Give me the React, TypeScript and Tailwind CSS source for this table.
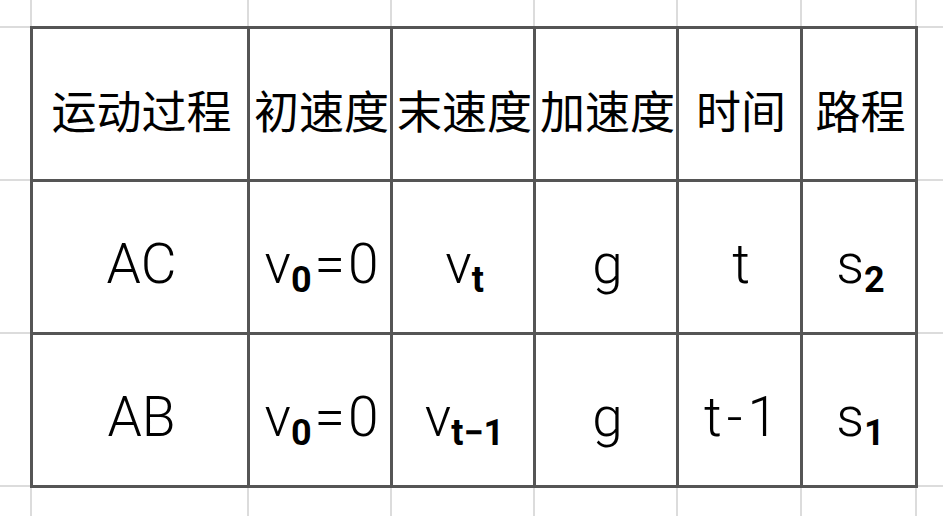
import type { ReactNode } from 'react';

const colWidths = ['w-[31px]', 'w-[217px]', 'w-[143px]', 'w-[143px]', 'w-[143px]', 'w-[124px]', 'w-[115px]', 'w-[27px]'];
const rowHeights = ['h-[27px]', 'h-[153px]', 'h-[153px]', 'h-[153px]', 'h-[30px]'];

const Sub = ({ children }: { children: ReactNode }) => (
  <sub className="text-[36px] font-bold">{children}</sub>
);

const header = ['运动过程', '初速度', '末速度', '加速度', '时间', '路程'];

const rows: ReactNode[][] = [
  [
    'AC',
    <>v<Sub>0</Sub><span className="px-[3px]">=</span>0</>,
    <>v<Sub>t</Sub></>,
    'g',
    't',
    <>s<Sub>2</Sub></>,
  ],
  [
    'AB',
    <>v<Sub>0</Sub><span className="px-[3px]">=</span>0</>,
    <>v<Sub>t−1</Sub></>,
    'g',
    <>t<span className="px-[5px]">-</span>1</>,
    <>s<Sub>1</Sub></>,
  ],
];

function cellClass(r: number, c: number) {
  const inTable = r >= 1 && r <= 3 && c >= 1 && c <= 6;
  const parts = [inTable ? 'border-[3px] border-[#555555]' : 'border-2 border-[#dcdcdc]'];
  if (r === 0) parts.push('border-t-0');
  if (r === 4) parts.push('border-b-0');
  if (c === 0) parts.push('border-l-0');
  if (c === 7) parts.push('border-r-0');
  return parts.join(' ');
}

export default function App() {
  const grid: ReactNode[][] = [
    Array(8).fill(null),
    [null, ...header, null],
    [null, ...rows[0], null],
    [null, ...rows[1], null],
    Array(8).fill(null),
  ];

  return (
    <div className="w-[943px] h-[516px] overflow-hidden bg-white">
      <table className="table-fixed border-collapse w-[943px] text-black">
        <colgroup>
          {colWidths.map((w, i) => (
            <col key={i} className={w} />
          ))}
        </colgroup>
        <tbody>
          {grid.map((row, r) => (
            <tr key={r} className={rowHeights[r]}>
              {row.map((content, c) => (
                <td key={c} className={`${cellClass(r, c)} p-0 text-center align-middle whitespace-nowrap`}>
                  {r === 1 ? (
                    <span className="block pt-3 pl-1 text-[45px] leading-none font-['Noto_Sans_CJK_SC',sans-serif]">
                      {content}
                    </span>
                  ) : r >= 2 && r <= 3 ? (
                    <span className="block pt-4 pl-1 text-[55px] leading-none font-light font-['Roboto',sans-serif]">
                      {content}
                    </span>
                  ) : null}
                </td>
              ))}
            </tr>
          ))}
        </tbody>
      </table>
    </div>
  );
}
